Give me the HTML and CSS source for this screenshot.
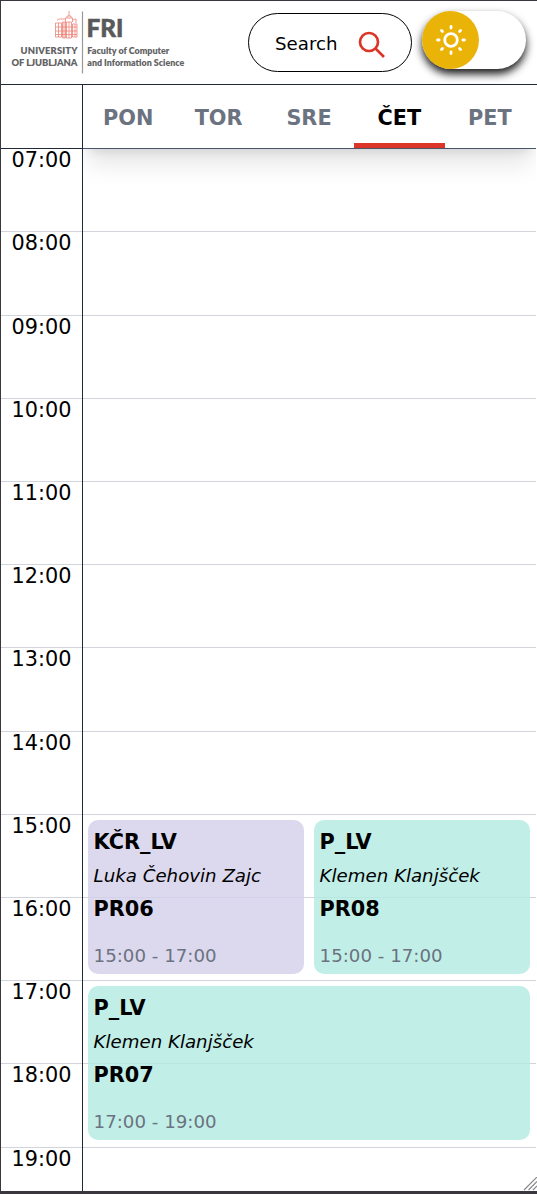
FILE: index.html
```html
<!DOCTYPE html>
<html lang="sl">
<head>
<meta charset="utf-8">
<title>FRI urnik</title>
<link rel="stylesheet" href="styles.css">
</head>
<body>
<div class="app">
  <header class="header">
    <svg class="logo" width="176" height="66" viewBox="10 8 176 66" role="img" aria-label="University of Ljubljana, FRI">
      <g class="building">
        <path d="M69 11v5M67 18v-2h4v2M65.500 22v-4h7v4M57 20.500l2-1.500h6M73 20l2-1h1v4M55.500 23h6v14h-6zM62.500 22h3v16h-3zM66.500 22h5v16h-5zM72.500 24h4.500v13h-4.500z"/>
        <path d="M55.500 27h21.500M55.500 31h21.500M55.500 34.500h21.500M58.500 23v14M64 22v16M69 22v16M75 24v13"/>
      </g>
      <path class="logo-rule" d="M82.500 11.500v62"/>
      <text class="logo-fri" x="86.500" y="36.700" textLength="37" lengthAdjust="spacingAndGlyphs">FRI</text>
      <g class="logo-text">
        <text x="20.500" y="54.300" textLength="57" lengthAdjust="spacing">UNIVERSITY</text>
        <text x="11.500" y="65.800" textLength="66" lengthAdjust="spacing">OF LJUBLJANA</text>
        <text x="87.300" y="54.300" textLength="82" lengthAdjust="spacingAndGlyphs">Faculty of Computer</text>
        <text x="87.300" y="65.800" textLength="97" lengthAdjust="spacingAndGlyphs">and Information Science</text>
      </g>
    </svg>
    <button class="search">
      <span>Search</span>
      <svg class="search-icon" width="28" height="28" viewBox="0 0 28 28"><circle cx="11" cy="11" r="9"/><path d="M17.500 17.500l8.500 8.500"/></svg>
    </button>
    <div class="toggle">
      <span class="knob">
        <svg class="sun" width="32" height="32" viewBox="-16 -16 32 32"><circle r="6.300"/><path d="M0-13.500v1.600M0 11.900v1.600M-13.500 0h1.600M11.900 0h1.600M-9.500-9.500l1 1M8.500 8.500l1 1M-9.500 9.500l1-1M8.500-8.500l1-1"/></svg>
      </span>
    </div>
  </header>
  <div class="tabs">
    <div class="corner"></div>
    <nav class="days">
      <span class="day">PON</span>
      <span class="day">TOR</span>
      <span class="day">SRE</span>
      <span class="day active">ČET</span>
      <span class="day">PET</span>
    </nav>
  </div>
  <main class="schedule">
    <div class="hours">
      <div class="hour"><span>07:00</span></div>
      <div class="hour"><span>08:00</span></div>
      <div class="hour"><span>09:00</span></div>
      <div class="hour"><span>10:00</span></div>
      <div class="hour"><span>11:00</span></div>
      <div class="hour"><span>12:00</span></div>
      <div class="hour"><span>13:00</span></div>
      <div class="hour"><span>14:00</span></div>
      <div class="hour"><span>15:00</span></div>
      <div class="hour"><span>16:00</span></div>
      <div class="hour"><span>17:00</span></div>
      <div class="hour"><span>18:00</span></div>
      <div class="hour"><span>19:00</span></div>
    </div>
    <div class="events">
      <article class="event lilac at-15 left">
        <h3>KČR_LV</h3><p class="teacher">Luka Čehovin Zajc</p><h3>PR06</h3><p class="time">15:00 - 17:00</p>
      </article>
      <article class="event mint at-15 right">
        <h3>P_LV</h3><p class="teacher">Klemen Klanjšček</p><h3>PR08</h3><p class="time">15:00 - 17:00</p>
      </article>
      <article class="event mint at-17 wide">
        <h3>P_LV</h3><p class="teacher">Klemen Klanjšček</p><h3>PR07</h3><p class="time">17:00 - 19:00</p>
      </article>
    </div>
    <svg class="grip" width="15" height="14" viewBox="0 0 15 14"><path d="M2 13L15 0M6.500 13L15 4.500M11 13l4-4"/></svg>
  </main>
</div>
</body>
</html>
```
FILE: styles.css
```css
* { box-sizing: border-box; }
body { margin: 0; background: #fff; color: #000; font-family: "DejaVu Sans", sans-serif; }
.app {
  height: 1194px;
  overflow: hidden;
  display: flex;
  flex-direction: column;
  border: solid #3a373e;
  border-width: 1px 0 3px 1px;
}
.header {
  height: 84px;
  flex: none;
  display: flex;
  align-items: flex-start;
  border-bottom: 1px solid #1f2937;
  padding: 7px 11px 0 9px;
}
.logo { flex: none; overflow: visible; }
.building path { fill: none; stroke: #ed8379; stroke-width: .8; }
.logo-rule { stroke: #999; stroke-width: 1.2; }
.logo-fri { font: 900 24.500px Lato, sans-serif; fill: #58595b; stroke: #58595b; stroke-width: .5; }
.logo-text { font: 800 9.400px Lato, sans-serif; fill: #626365; }
.search {
  width: 164px;
  height: 59px;
  margin: 5px 0 0 62px;
  padding: 0 25px 0 26px;
  display: flex;
  align-items: center;
  justify-content: space-between;
  border: 1.300px solid #000;
  border-radius: 30px;
  background: #fff;
  color: #000;
  font: 18.200px "DejaVu Sans", sans-serif;
}
.search span { padding-top: 2px; }
.search-icon { fill: none; stroke: #dc3427; stroke-width: 2.700; margin-top: 4px; }
.toggle {
  width: 104px;
  height: 58px;
  margin: 3px 0 0 10px;
  border-radius: 29px;
  background: #fff;
  box-shadow: 0 5px 8px rgba(0, 0, 0, .9);
}
.knob {
  width: 57px;
  height: 58px;
  border-radius: 50%;
  background: #eab308;
  display: flex;
  align-items: center;
  justify-content: center;
}
.sun { fill: none; stroke: #fff; stroke-width: 2.800; stroke-linecap: round; }
.tabs { height: 64px; flex: none; display: flex; position: relative; z-index: 1; }
.corner {
  width: 82px;
  position: relative;
  z-index: 1;
  border: solid #1f2937;
  border-width: 0 1px 1px 0;
  background: #fff;
}
.days {
  width: 453px;
  padding-right: 1px;
  display: grid;
  grid-template-columns: repeat(5, 1fr);
  border-bottom: 1px solid #475569;
  background: #fff;
  box-shadow: 0 20px 25px -5px rgba(0, 0, 0, .1), 0 8px 10px -6px rgba(0, 0, 0, .1);
  clip-path: inset(0 0 -60px 0);
}
.day {
  display: flex;
  align-items: center;
  justify-content: center;
  padding-top: 7px;
  border-bottom: 5px solid transparent;
  color: #6b7280;
  font-size: 20.800px;
  font-weight: 700;
}
.day.active { color: #000; border-color: #dc3427; }
.schedule { flex: 1; position: relative; min-height: 0; }
.hours { width: 535px; padding-top: .280px; }
.hour { height: 83.200px; border-bottom: 1px solid #d1d5db; }
.hour span {
  display: block;
  width: 81px;
  height: 100%;
  line-height: 22.800px;
  text-align: center;
  font-size: 20.800px;
}
.events {
  position: absolute;
  inset: 0 1px 0 81px;
  border-left: 1px solid #1f2937;
  padding: .2px 1px 0 0;
  display: grid;
  grid-template-columns: 1fr 1fr;
  grid-template-rows: repeat(13, 83.200px);
}
.event { margin: 5px 5px 7px; padding: 7px 5px 0 5.600px; border-radius: 10px; }
.event h3, .event p { margin: 0; white-space: nowrap; }
.event h3 { font-size: 20.800px; line-height: 31px; }
.event .teacher { font-size: 18.200px; line-height: 35.600px; margin-bottom: .6px; font-style: italic; }
.event .time { font-size: 18.200px; line-height: 30px; margin-top: 15.800px; color: #6b7280; }
.lilac { background: rgba(211, 208, 234, .8); }
.mint { background: rgba(178, 235, 225, .8); }
.at-15 { grid-row: 9 / span 2; }
.at-17 { grid-row: 11 / span 2; }
.left { grid-column: 1; }
.right { grid-column: 2; }
.wide { grid-column: 1 / -1; }
.grip { position: absolute; right: 0; bottom: 0; fill: none; stroke: #888; stroke-width: 1.2; }
```
